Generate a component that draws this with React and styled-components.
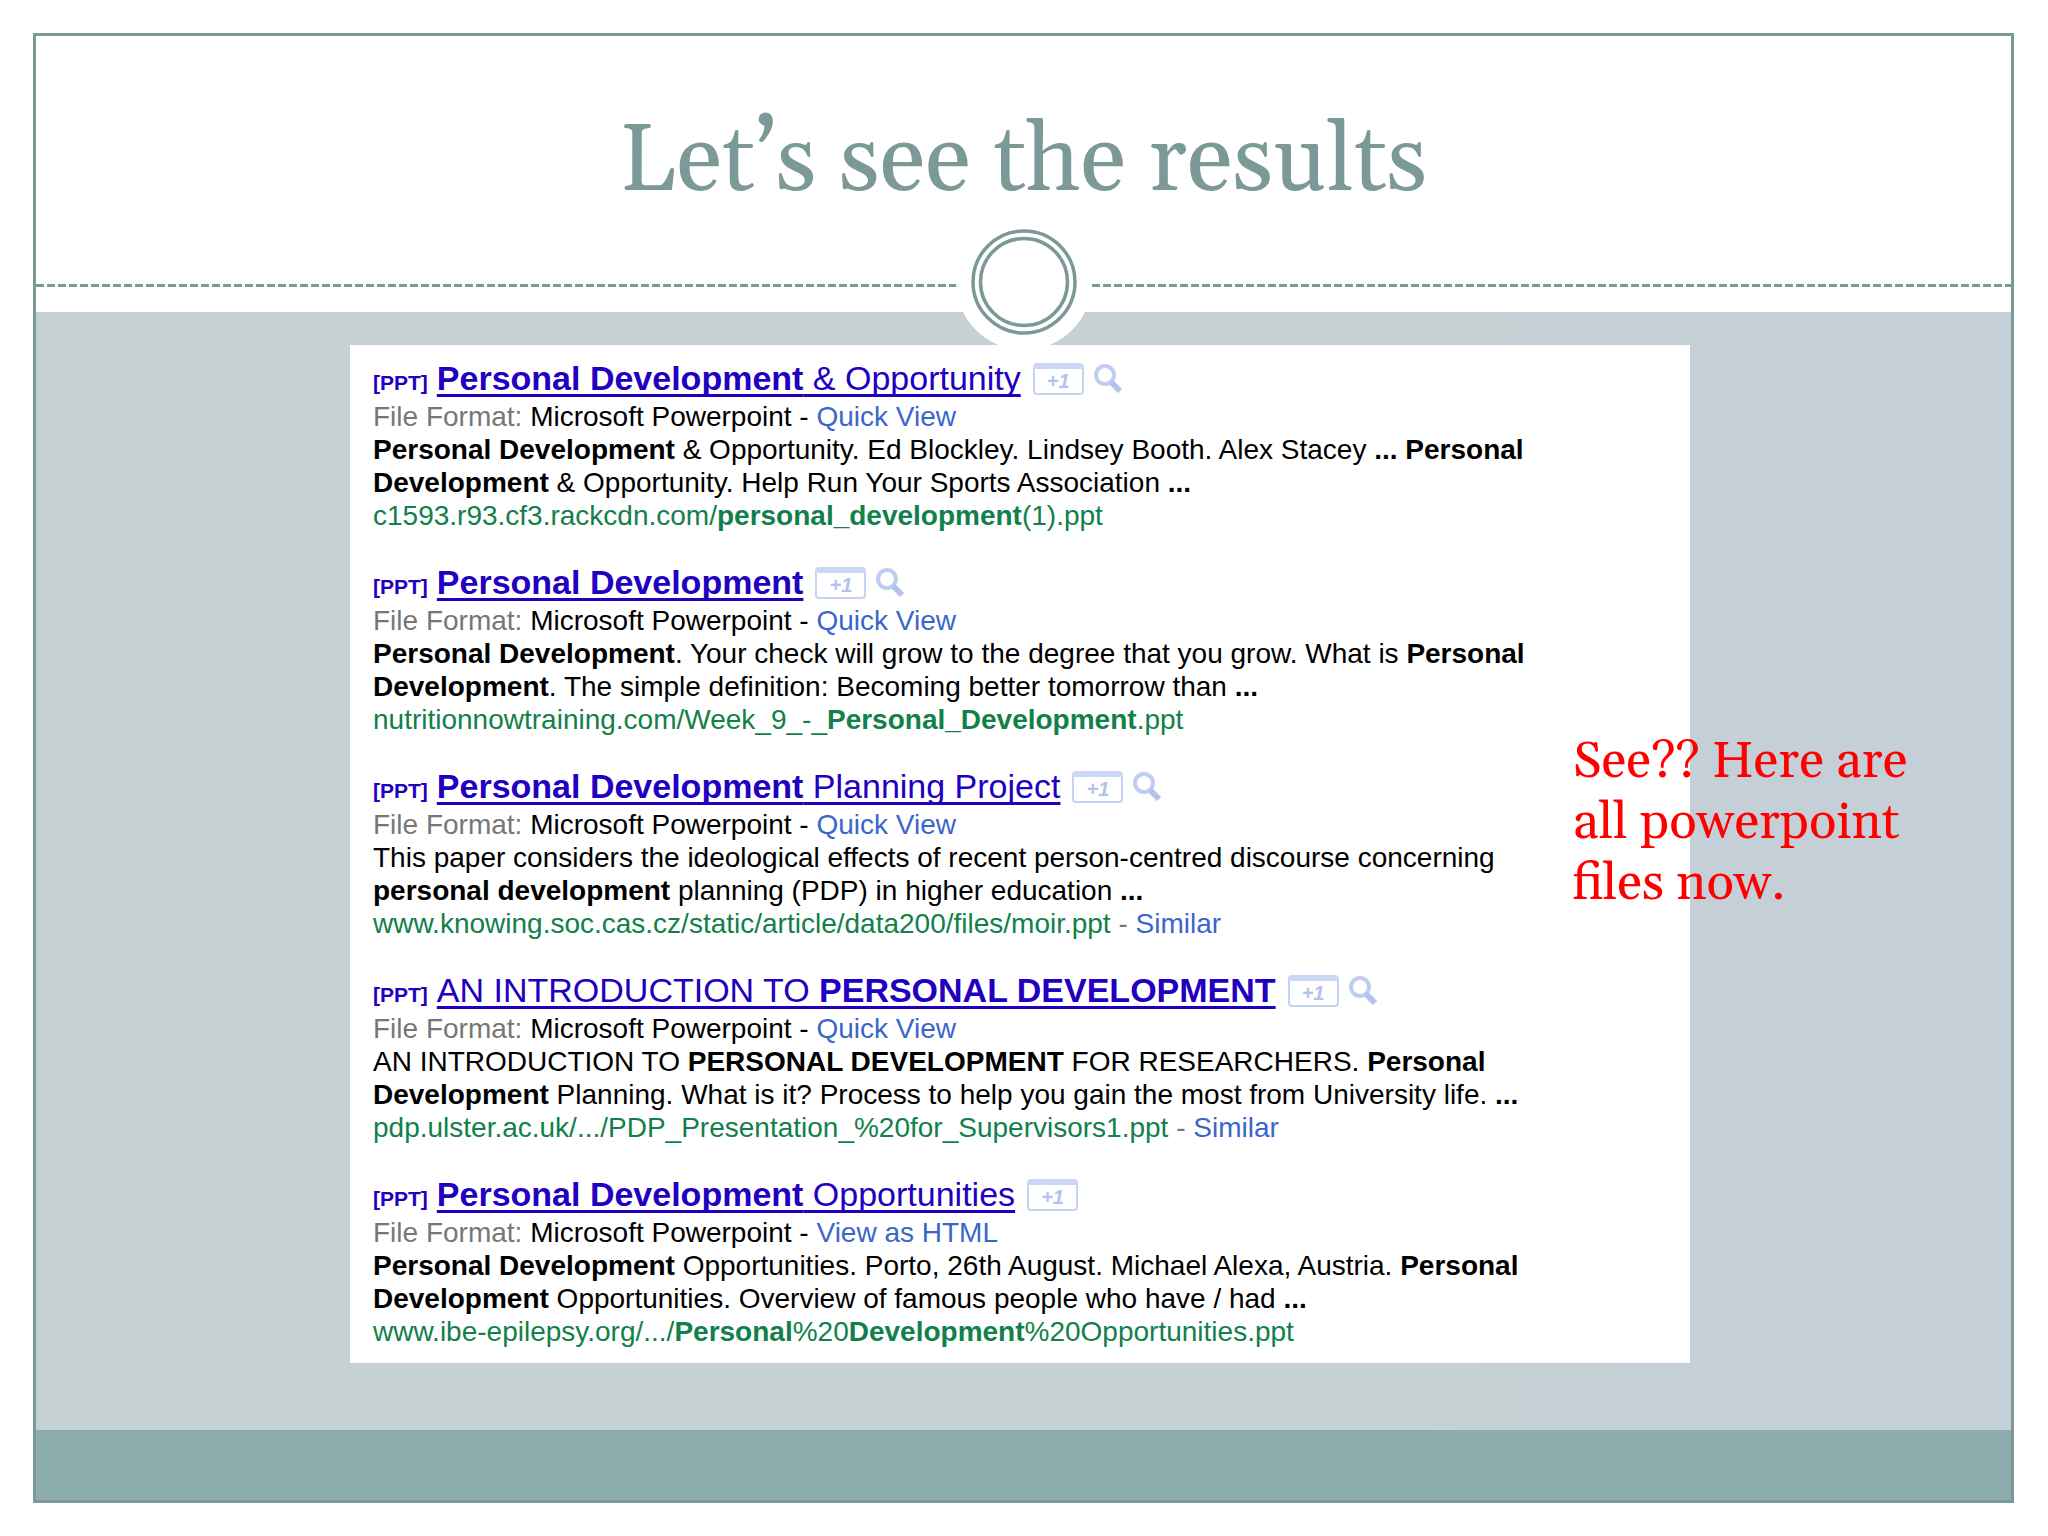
import React from "react";
import styled, { createGlobalStyle } from "styled-components";

const ink = "#7b9996";

const GlobalStyle = createGlobalStyle`
  *, *::before, *::after { box-sizing: border-box; }
  body { margin: 0; background: #ffffff; }
`;

const Page = styled.main`
  display: flex;
  min-height: 100vh;
  padding: 33px 34px 33px 33px;
`;

const Slide = styled.article`
  display: flex;
  flex: 1;
  flex-direction: column;
  border: 3px solid ${ink};
`;

const Header = styled.header`
  display: flex;
  flex-direction: column;
  padding: 69px 0 25px;
`;

const Title = styled.h1`
  margin: 0 0 63px;
  color: ${ink};
  font: 400 94px/116px Georgia, Gelasio, "Liberation Serif", serif;
  text-align: center;
`;

const Divider = styled.div`
  position: relative;
  display: flex;
  justify-content: center;
  height: 3px;
  background: repeating-linear-gradient(90deg, ${ink} 0 8px, transparent 8px 11px);
`;

const Emblem = styled.svg`
  position: absolute;
  top: -72px;
  width: 144px;
  height: 144px;
`;

const Body = styled.section`
  display: grid;
  flex: 1;
  grid-template-columns: minmax(0, 314fr) minmax(0, 1340fr) minmax(0, 321fr);
  align-items: start;
  padding: 33px 0 67px;
  background: linear-gradient(90deg, #c5d1d2 70%, #c5cfd7 85%);
`;

const Results = styled.ol`
  display: flex;
  flex-direction: column;
  grid-column: 2;
  gap: 30px;
  margin: 0;
  padding: 13px 23px 15px;
  background: #ffffff;
  color: #000000;
  font: 28px/33px Arial, "Liberation Sans", sans-serif;
  list-style: none;
  white-space: nowrap;
`;

const Result = styled.li`
  display: block;
`;

const Heading = styled.h2`
  display: flex;
  align-items: baseline;
  height: 42px;
  margin: 0;
  color: #2200c1;
  font-size: 34px;
  font-weight: 400;
  line-height: 40px;
`;

const FileType = styled.span`
  margin-right: 9px;
  font-size: 21px;
  font-weight: 700;
  line-height: 24px;
`;

const TitleLink = styled.a`
  margin-right: 12px;
  color: inherit;
  text-decoration: underline;
  text-decoration-skip-ink: none;
  text-decoration-thickness: 3px;
  text-underline-offset: 4px;
`;

const IconButton = styled.button`
  display: flex;
  align-self: center;
  margin: 0 10px 0 0;
  padding: 0;
  border: 0;
  background: none;
`;

const PlusOne = styled.button`
  align-self: center;
  width: 51px;
  height: 32px;
  margin: 0 10px 0 0;
  padding: 0;
  border: 2px solid #c6d4f4;
  border-top: 6px solid #cbd8f5;
  border-radius: 4px;
  background: #ffffff;
  color: #b3c2ec;
  font: italic 700 20px/24px Arial, "Liberation Sans", sans-serif;
`;

const Line = styled.p`
  margin: 0;
`;

const Label = styled.span`
  color: #777777;
`;

const Action = styled.a`
  color: #3a66cc;
  text-decoration: none;
`;

const Address = styled.cite`
  color: #12804a;
  font-style: normal;
`;

const Footer = styled.footer`
  height: 70px;
  background: #8babac;
`;

const Note = styled.p`
  z-index: 1;
  grid-row: 1;
  grid-column: 3;
  margin: 387px 0 0 -117px;
  padding-right: 72px;
  color: #ff0000;
  font: 51px/61px Georgia, Gelasio, "Liberation Serif", serif;
`;

const results = [
  {
    title: <><b>Personal Development</b> &amp; Opportunity</>,
    action: "Quick View",
    preview: true,
    lines: [
      <><b>Personal Development</b> &amp; Opportunity. Ed Blockley. Lindsey Booth. Alex Stacey <b>... Personal</b></>,
      <><b>Development</b> &amp; Opportunity. Help Run Your Sports Association <b>...</b></>,
    ],
    address: <>c1593.r93.cf3.rackcdn.com/<b>personal_development</b>(1).ppt</>,
  },
  {
    title: <b>Personal Development</b>,
    action: "Quick View",
    preview: true,
    lines: [
      <><b>Personal Development</b>. Your check will grow to the degree that you grow. What is <b>Personal</b></>,
      <><b>Development</b>. The simple definition: Becoming better tomorrow than <b>...</b></>,
    ],
    address: <>nutritionnowtraining.com/Week_9_-_<b>Personal_Development</b>.ppt</>,
  },
  {
    title: <><b>Personal Development</b> Planning Project</>,
    action: "Quick View",
    preview: true,
    lines: [
      <>This paper considers the ideological effects of recent person-centred discourse concerning</>,
      <><b>personal development</b> planning (PDP) in higher education <b>...</b></>,
    ],
    address: <>www.knowing.soc.cas.cz/static/article/data200/files/moir.ppt</>,
    similar: true,
  },
  {
    title: <>AN INTRODUCTION TO <b>PERSONAL DEVELOPMENT</b></>,
    action: "Quick View",
    preview: true,
    lines: [
      <>AN INTRODUCTION TO <b>PERSONAL DEVELOPMENT</b> FOR RESEARCHERS. <b>Personal</b></>,
      <><b>Development</b> Planning. What is it? Process to help you gain the most from University life. <b>...</b></>,
    ],
    address: <>pdp.ulster.ac.uk/.../PDP_Presentation_%20for_Supervisors1.ppt</>,
    similar: true,
  },
  {
    title: <><b>Personal Development</b> Opportunities</>,
    action: "View as HTML",
    preview: false,
    lines: [
      <><b>Personal Development</b> Opportunities. Porto, 26th August. Michael Alexa, Austria. <b>Personal</b></>,
      <><b>Development</b> Opportunities. Overview of famous people who have / had <b>...</b></>,
    ],
    address: <>www.ibe-epilepsy.org/.../<b>Personal</b>%20<b>Development</b>%20Opportunities.ppt</>,
  },
];

function Magnifier() {
  return (
    <svg width="29" height="30" viewBox="0 0 29 30" fill="none" aria-hidden="true">
      <circle cx="11" cy="11" r="9" stroke="#bfcdf0" strokeWidth="4" />
      <path d="M17 18L26 27" stroke="#b3c3ec" strokeWidth="6" />
    </svg>
  );
}

function ResultItem({ item }) {
  return (
    <Result>
      <Heading>
        <FileType>[PPT]</FileType>
        <TitleLink href="#result">{item.title}</TitleLink>
        <PlusOne type="button">+1</PlusOne>
        {item.preview && (
          <IconButton type="button" aria-label="Preview">
            <Magnifier />
          </IconButton>
        )}
      </Heading>
      <Line>
        <Label>File Format:</Label> Microsoft Powerpoint - <Action href="#view">{item.action}</Action>
      </Line>
      {item.lines.map((line, i) => (
        <Line key={i}>{line}</Line>
      ))}
      <Line>
        <Address>{item.address}</Address>
        {item.similar && (
          <>
            <Label> - </Label>
            <Action href="#similar">Similar</Action>
          </>
        )}
      </Line>
    </Result>
  );
}

export default function App() {
  return (
    <>
      <GlobalStyle />
      <Page>
        <Slide>
          <Header>
            <Title>Let’s see the results</Title>
            <Divider>
              <Emblem viewBox="0 0 144 144" aria-hidden="true">
                <circle cx="72" cy="70" r="68" fill="#ffffff" />
                <circle cx="72" cy="70" r="51" fill="none" stroke={ink} strokeWidth="3.5" />
                <circle cx="72" cy="70" r="43.5" fill="none" stroke={ink} strokeWidth="3.5" />
              </Emblem>
            </Divider>
          </Header>
          <Body>
            <Results>
              {results.map((item, i) => (
                <ResultItem key={i} item={item} />
              ))}
            </Results>
            <Note>See?? Here are all powerpoint files now.</Note>
          </Body>
          <Footer />
        </Slide>
      </Page>
    </>
  );
}
